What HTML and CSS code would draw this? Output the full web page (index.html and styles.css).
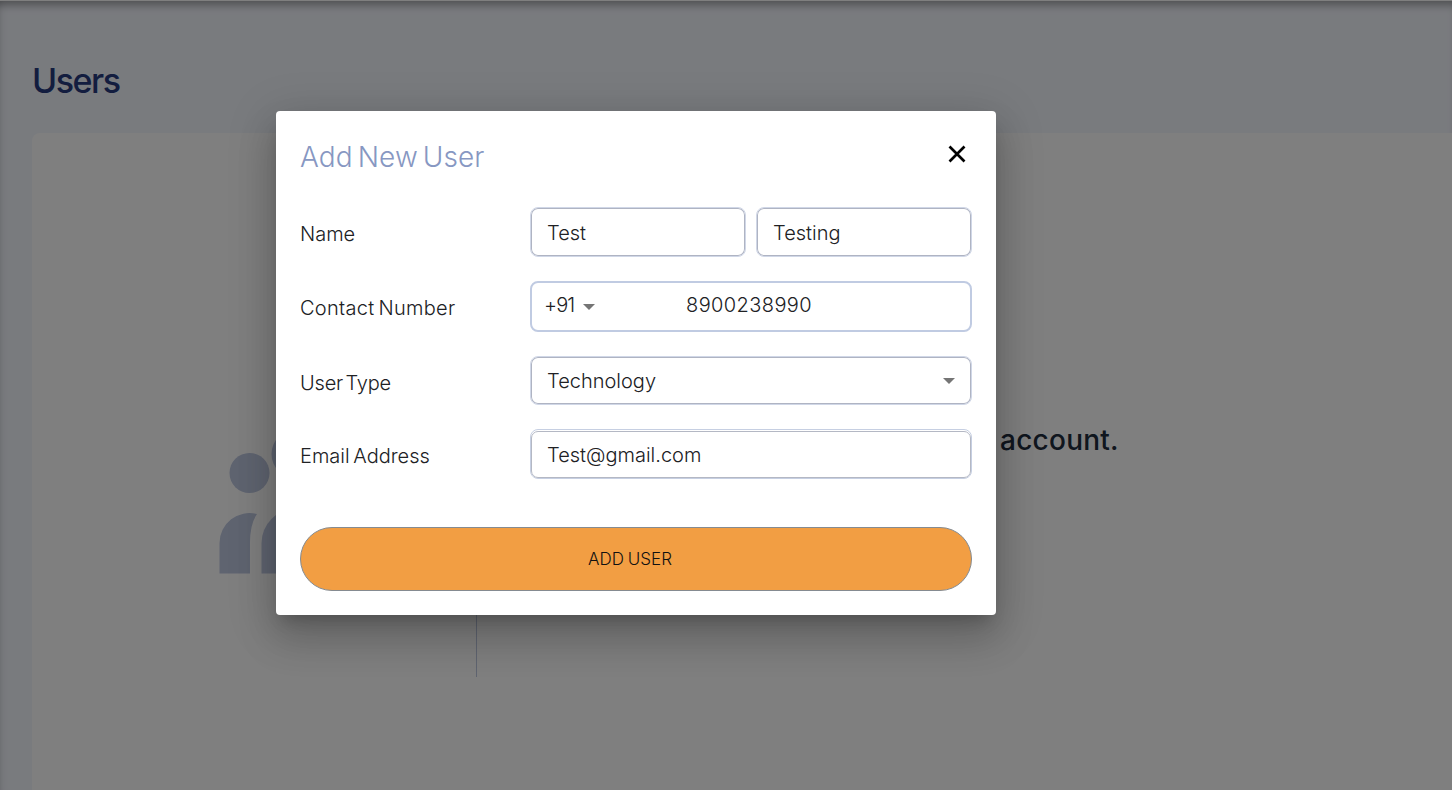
FILE: index.html
```html
<!DOCTYPE html>
<html lang="en">
<head>
<meta charset="utf-8">
<title>Users</title>
<link rel="stylesheet" href="styles.css">
</head>
<body>
<main class="page">
  <h1 class="page-title"><span class="t-users">Users</span></h1>
  <section class="card">
    <div class="art">
      <svg width="160" height="150" viewBox="0 0 160 150" fill="#bec8e1">
        <circle cx="33.500" cy="49" r="20"/>
        <circle cx="79.500" cy="30" r="24"/>
        <circle cx="126" cy="49" r="20"/>
        <path d="M3.500 149.500V119A30 30 0 0 1 41 90Q34 100 34 119V149.500Z"/>
        <path d="M45.500 149.500V119A34 34 0 0 1 113.500 119V149.500Z"/>
        <path d="M156 149.500V119A30 30 0 0 0 118 90Q125 100 125 119V149.500Z"/>
      </svg>
    </div>
    <div class="divider"></div>
    <p class="message"><span class="t-account">account.</span></p>
  </section>
</main>
<div class="backdrop">
  <form class="dialog">
    <header class="dialog-head">
      <h2 class="dialog-title"><span class="t-title">Add New User</span></h2>
      <svg class="close" width="18" height="18" viewBox="0 0 18 18" stroke="#000" stroke-width="2.700"><path d="M1.500 1.500L16.500 16.500M16.500 1.500L1.500 16.500"/></svg>
    </header>
    <div class="row row-name">
      <label class="label"><span class="t-name">Name</span></label>
      <div class="pair">
        <div class="field low"><span class="t-test">Test</span></div>
        <div class="field low"><span class="t-testing">Testing</span></div>
      </div>
    </div>
    <div class="row row-contact">
      <label class="label"><span class="t-contact">Contact Number</span></label>
      <div class="field phone">
        <span class="code"><span class="t-code">+91</span></span>
        <svg class="caret" width="12" height="6" viewBox="0 0 12 6"><path d="M0 0H12L6 6Z" fill="#757575"/></svg>
        <span class="number"><span class="t-number">8900238990</span></span>
      </div>
    </div>
    <div class="row row-type">
      <label class="label"><span class="t-type">User Type</span></label>
      <div class="field select"><span class="t-tech">Technology</span>
        <svg class="caret" width="12" height="6" viewBox="0 0 12 6"><path d="M0 0H12L6 6Z" fill="#757575"/></svg>
      </div>
    </div>
    <div class="row row-email">
      <label class="label"><span class="t-email">Email Address</span></label>
      <div class="field email low"><span class="t-mail">Test@gmail.com</span></div>
    </div>
    <button class="submit" type="button"><span class="t-add">ADD USER</span></button>
  </form>
</div>
</body>
</html>
```
FILE: styles.css
```css
* { box-sizing: border-box; }
body { margin: 0; height: 790px; overflow: hidden; font-family: Inter, "Open Sans", sans-serif; }
.page { height: 790px; padding: 60px 0 0 32px; background: #f3f6fd; border-top: 1px solid #fff;
  box-shadow: inset 0 9px 8px -5px rgba(0,0,0,.35), inset 8px 0 10px -8px rgba(0,0,0,.1); }
.page-title { margin: 0; height: 72px; font-size: 34px; line-height: 39px; font-weight: 500; color: #263a7e; }
.t-users { letter-spacing: -1.45px; }
.card { display: flex; height: 657px; padding-top: 288px; background: #fff; border-radius: 8px 0 0 0; }
.art { width: 444px; padding: 3px 0 0 184px; }
.art svg { display: block; }
.divider { width: 1px; height: 256px; background: #bec8e1; }
.message { margin: 1px 0 0 523px; font-size: 28px; line-height: 36px; font-weight: 500; color: #202c3c; }
.t-account { letter-spacing: .25px; }
.backdrop { position: absolute; inset: 0; background: rgba(0,0,0,.5); }
.dialog { position: absolute; left: 276px; top: 111px; width: 720px; height: 504px; padding: 24px; background: #fff; border-radius: 4px; color: #202124;
  box-shadow: 0 11px 15px -7px rgba(0,0,0,.2), 0 24px 38px 3px rgba(0,0,0,.14), 0 9px 46px 8px rgba(0,0,0,.12); }
.dialog-head { display: flex; justify-content: space-between; height: 72px; padding: 0 6px 0 0; }
.dialog-title { margin: 0; padding-top: 4px; font-size: 28px; line-height: 36px; font-weight: 350; color: #8797c2; }
.t-title { letter-spacing: .1px; word-spacing: -3px; }
.close { margin-top: 10px; }
.row { display: grid; grid-template-columns: 230px 442px; font-size: 20px; font-weight: 300; }
.label { line-height: 30px; padding-top: 12px; }
.t-contact { letter-spacing: .3px; word-spacing: -2px; }
.t-type { letter-spacing: -.2px; word-spacing: -3px; }
.t-email { word-spacing: -2px; }
.t-number { letter-spacing: .4px; }
.t-code { letter-spacing: -.9px; }
.pair { display: grid; grid-template-columns: 216px 216px; gap: 10px; }
.field { position: relative; display: flex; align-items: center; height: 50px; padding: 0 16px; border: 1px solid #d0d7e7; border-radius: 8px; box-shadow: inset 0 0 0 1px #afb4c3; }
.low { padding-top: 2px; }
.row-name, .row-contact { height: 74px; }
.row-type { height: 74px; padding-top: 1px; }
.row-email { height: 98px; }
.phone { height: 51px; padding: 0 0 3px 12px; border: 2px solid #c0cbe2; box-shadow: none; }
.code { width: 31px; }
.phone .caret { margin: 4px 0 0 8px; }
.number { margin-left: 91px; }
.select { height: 49px; justify-content: space-between; }
/* The email outline sits one pixel below its frame */
.email { border-color: #c6cfe2; box-shadow: none; }
.email::after { content: ""; position: absolute; inset: 1px 0 0; border: 1px solid #b4b8c4; border-radius: 7px; }
.submit { width: 672px; height: 64px; margin: 0; padding: 0; border: 1px solid #858b91; border-radius: 32px; background: #f29e43; color: #111; font: 300 17px/24px Inter, sans-serif; display: flex; justify-content: center; align-items: center; }
.t-add { margin-right: 12px; word-spacing: -1px; }
```
